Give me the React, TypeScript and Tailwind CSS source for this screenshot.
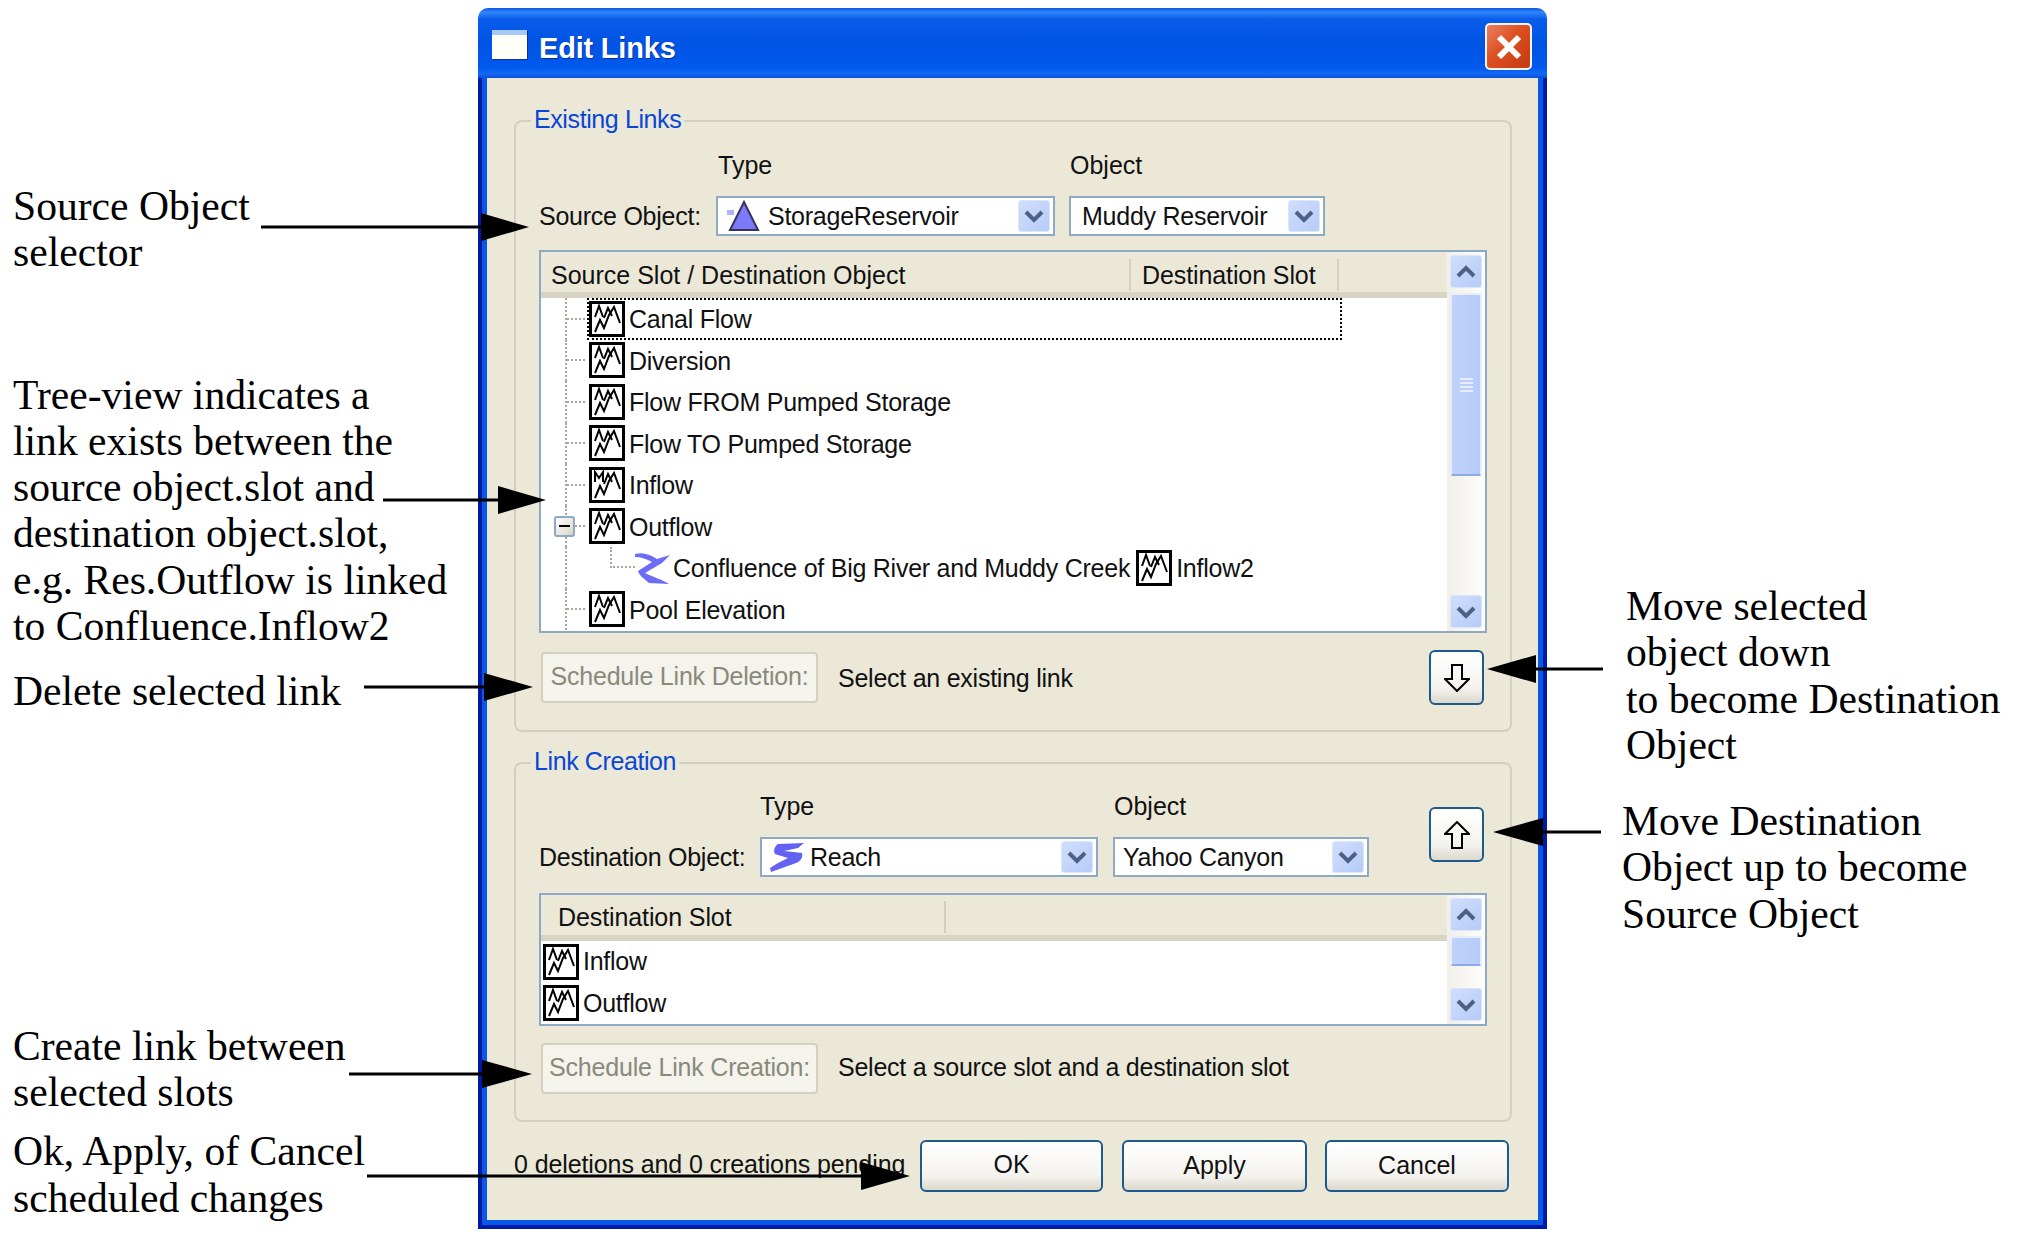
import React from 'react';

const Chevron = ({ up = false }: { up?: boolean }) => (
  <svg width="20" height="14" viewBox="0 0 20 14" className="block">
    <path d={up ? 'M2 11 L10 3 L18 11' : 'M2 3 L10 11 L18 3'} fill="none" stroke="#4d6185" strokeWidth="4" />
  </svg>
);

const ArrowBox = ({ up = false, className }: { up?: boolean; className: string }) => (
  <div className={`flex items-center justify-center rounded-[3px] border border-[#dbe6fd] bg-[linear-gradient(135deg,#d0defc,#b6cbf8)] ${className}`}>
    <Chevron up={up} />
  </div>
);

const WaveIcon = ({ m = false }: { m?: boolean }) => (
  <svg width="36" height="36" viewBox="0 0 36 36" className="block shrink-0">
    <rect x="1.5" y="1.5" width="33" height="33" fill="#fff" stroke="#000" strokeWidth="3" />
    <polyline
      points={m ? '6,15 6,5 10,11 14,5 14,15' : '6,16 10,5 14,16'}
      fill="none"
      stroke="#000"
      strokeWidth="2"
    />
    <polyline points="6,31 11,19 15,27 20,14 25,6 31,22" fill="none" stroke="#000" strokeWidth="2" />
    <polyline points="15,17 19,7 23,15" fill="none" stroke="#000" strokeWidth="2" />
  </svg>
);

const RiverIcon = () => (
  <svg width="35" height="32" viewBox="0 0 35 32" className="block shrink-0">
    <path
      d="M0 2 C8 0 14 2 22 7 L35 3 L27 11 L10 21 C16 24 28 28 34 32 L14 31 C8 26 4 23 3 19 L17 10 C12 7 6 5 0 5 Z"
      fill="#6d6cf6"
    />
  </svg>
);

const ReachIcon = () => (
  <svg width="34" height="29" viewBox="0 0 34 29" className="block shrink-0">
    <path
      d="M8 1 L34 0 L28 5 L14 8 L32 10 C33 14 31 18 26 20 L1 29 L0 25 L8 20 L18 15 L5 11 C3 7 5 3 8 1 Z"
      fill="#6362f5"
    />
  </svg>
);

const ReservoirIcon = () => (
  <svg width="33" height="32" viewBox="0 0 33 32" className="block shrink-0">
    <rect x="0" y="10" width="7" height="5" fill="#b0b4f8" />
    <polygon points="17,2 31,30 3,30" fill="#7c7af8" stroke="#34345c" strokeWidth="2" />
  </svg>
);

const Combo = ({ width, icon, gap, text }: { width: string; icon?: React.ReactNode; gap: string; text: string }) => (
  <div className={`flex h-[40px] items-center border-2 border-[#8fa9c4] bg-white ${width}`}>
    {icon}
    <span className={`flex-1 tracking-[-0.25px] ${gap}`}>{text}</span>
    <ArrowBox className="mr-[3px] h-[32px] w-[32px]" />
  </div>
);

const XpButton = ({ className, children }: { className: string; children: React.ReactNode }) => (
  <div className={`flex items-center justify-center rounded-[6px] border-2 border-[#1f5a8c] bg-[linear-gradient(180deg,#ffffff,#f4f3ee_70%,#dcd8cc)] ${className}`}>
    {children}
  </div>
);

const DisabledButton = ({ children }: { children: React.ReactNode }) => (
  <div className="ml-[2px] flex h-[51px] w-[277px] items-center justify-center rounded-[4px] border-2 border-[#d2d0c0] bg-[#f4f3ec] pb-[3px] tracking-[-0.2px] text-[#8a897c]">
    {children}
  </div>
);

const Scrollbar = ({ thumb, grip = false }: { thumb: string; grip?: boolean }) => (
  <div className="flex w-[38px] shrink-0 flex-col bg-[linear-gradient(90deg,#f1efe8,#fdfdfb)] p-[3px]">
    <ArrowBox up className="h-[33px] w-full" />
    <div className={`mt-[5px] flex items-center justify-center rounded-[3px] border-2 border-[#e6eefe] border-b-[#8fa9e6] bg-[linear-gradient(90deg,#c0d2fb,#b6cbf8)] ${thumb}`}>
      {grip && (
        <div className="flex w-[13px] flex-col gap-[2px]">
          <div className="h-[2px] bg-[#e6eefe]" />
          <div className="h-[2px] bg-[#e6eefe]" />
          <div className="h-[2px] bg-[#e6eefe]" />
          <div className="h-[2px] bg-[#e6eefe]" />
        </div>
      )}
    </div>
    <ArrowBox className="mt-auto h-[33px] w-full" />
  </div>
);

const HeaderCell = ({ className, children }: { className: string; children?: React.ReactNode }) => (
  <div className={`flex h-[32px] items-center border-r-2 border-[#d2cfbc] ${className}`}>{children}</div>
);

const Connector = ({ bare = false, children }: { bare?: boolean; children?: React.ReactNode }) => (
  <div className="relative ml-[24px] flex w-[24px] shrink-0 items-center self-stretch border-l-2 border-dotted border-[#a9a89e]">
    {!bare && <div className="w-[18px] border-t-2 border-dotted border-[#a9a89e]" />}
    {children}
  </div>
);

const RowText = ({ className = 'ml-[4px]', children }: { className?: string; children: React.ReactNode }) => (
  <span className={`mt-[2px] tracking-[-0.25px] whitespace-nowrap ${className}`}>{children}</span>
);

const slots = [
  { name: 'Diversion' },
  { name: 'Flow FROM Pumped Storage' },
  { name: 'Flow TO Pumped Storage' },
  { name: 'Inflow', m: true },
];

const GroupBox = ({ title, className, children }: { title: string; className: string; children: React.ReactNode }) => (
  <div className={`relative rounded-[8px] border-2 border-[#d2d0bf] px-[23px] ${className}`}>
    <span className="absolute left-[15px] top-[-15px] bg-[#ebe8d8] px-[3px] tracking-[-0.4px] text-[#0a46d6]">{title}</span>
    {children}
  </div>
);

const Annotation = ({ lines, className = '' }: { lines: string[]; className?: string }) => (
  <div className={`font-['Liberation_Serif',serif] text-[41.6px] leading-[46.3px] whitespace-nowrap text-black ${className}`}>
    {lines.map((l) => (
      <div key={l}>{l}</div>
    ))}
  </div>
);

const arrows = [
  { x1: 261, y: 227, base: 481, tip: 529 },
  { x1: 383, y: 500, base: 498, tip: 546 },
  { x1: 364, y: 687, base: 484, tip: 533 },
  { x1: 349, y: 1074, base: 482, tip: 532 },
  { x1: 367, y: 1176, base: 861, tip: 910 },
  { x1: 1603, y: 669, base: 1536, tip: 1487 },
  { x1: 1601, y: 832, base: 1543, tip: 1493 },
];

export default function App() {
  return (
    <div className="relative flex h-[1238px] w-[2017px] overflow-hidden bg-white font-['Liberation_Sans',sans-serif] text-[25px] leading-none text-[#111]">
      {/* left notes */}
      <div className="w-[478px] shrink-0 pl-[13px] pt-[183px]">
        <Annotation lines={['Source Object', 'selector']} />
        <Annotation
          className="mt-[96px]"
          lines={[
            'Tree-view indicates a',
            'link exists between the',
            'source object.slot and',
            'destination object.slot,',
            'e.g. Res.Outflow is linked',
            'to Confluence.Inflow2',
          ]}
        />
        <Annotation className="mt-[19px]" lines={['Delete selected link']} />
        <Annotation className="mt-[308px]" lines={['Create link between', 'selected slots']} />
        <Annotation className="mt-[13px]" lines={['Ok, Apply, of Cancel', 'scheduled changes']} />
      </div>

      {/* dialog */}
      <div className="mt-[8px] flex h-[1221px] w-[1069px] shrink-0 flex-col">
        <div className="flex h-[70px] shrink-0 items-center rounded-t-[10px] bg-[linear-gradient(180deg,#0a56e0_0%,#2f86fb_6%,#0a5cea_16%,#0054e4_50%,#0058ee_85%,#1368f2_94%,#0a4fd8_100%)] pl-[14px] pr-[15px]">
          <div className="mt-[2px] h-[29px] w-[35px] border-t-[5px] border-[#a8c8f8] bg-[#fffff6] shadow-[1px_1px_0_#0a2f9a]" />
          <span className="ml-[12px] mt-[10px] text-[29px] font-bold tracking-[-0.2px] text-white [text-shadow:1px_1px_0_#0a2f9a]">Edit Links</span>
          <div className="ml-auto mt-[7px] flex h-[47px] w-[47px] items-center justify-center rounded-[5px] border-2 border-[#f4f4f4] bg-[linear-gradient(135deg,#ea8064,#dc4f20_45%,#c23a10)]">
            <svg width="30" height="30" viewBox="0 0 30 30">
              <path d="M5 5 L25 25 M25 5 L5 25" stroke="#fff" strokeWidth="6" />
            </svg>
          </div>
        </div>

        <div className="flex-1 border-x-4 border-b-4 border-[#0019a8]">
          <div className="h-full border-x-[5px] border-b-[5px] border-[#0a58e6] bg-[#ebe8d8] pl-[27px] pr-[26px] pt-[42px]">
            <GroupBox title="Existing Links" className="h-[612px] pt-[28px]">
              <div className="flex h-[30px] items-center">
                <div className="w-[179px]" />
                <div className="w-[352px]">Type</div>
                <div>Object</div>
              </div>
              <div className="mt-[16px] flex items-center">
                <div className="w-[177px] tracking-[-0.25px]">Source Object:</div>
                <Combo width="w-[339px]" icon={<div className="ml-[9px]"><ReservoirIcon /></div>} gap="pl-[8px]" text="StorageReservoir" />
                <div className="w-[14px]" />
                <Combo width="w-[256px]" gap="pl-[11px]" text="Muddy Reservoir" />
              </div>

              <div className="mt-[14px] flex h-[383px] border-2 border-[#8fa9c4] bg-white">
                <div className="min-w-0 flex-1">
                  <div className="flex h-[46px] items-center border-b-[6px] border-[#d8d4c3] bg-[#ebe8d8] pt-[6px]">
                    <HeaderCell className="w-[590px] pl-[10px]">Source Slot / Destination Object</HeaderCell>
                    <HeaderCell className="w-[208px] pl-[11px] tracking-[-0.1px]">Destination Slot</HeaderCell>
                  </div>
                  <div className="flex h-[41.5px] items-center">
                    <Connector />
                    <div className="flex h-[38px] w-[751px] items-center outline-2 outline-dotted outline-black">
                      <WaveIcon />
                      <RowText>Canal Flow</RowText>
                    </div>
                  </div>
                  {slots.map((s) => (
                    <div key={s.name} className="flex h-[41.5px] items-center">
                      <Connector />
                      <WaveIcon m={s.m} />
                      <RowText>{s.name}</RowText>
                    </div>
                  ))}
                  <div className="flex h-[41.5px] items-center">
                    <Connector>
                      <div className="absolute left-[-13px] flex h-[21px] w-[21px] items-center justify-center rounded-[3px] border-2 border-[#8fa9c4] bg-[linear-gradient(135deg,#ffffff,#d8d4c6)]">
                        <div className="h-[2px] w-[11px] bg-black" />
                      </div>
                    </Connector>
                    <WaveIcon />
                    <RowText>Outflow</RowText>
                  </div>
                  <div className="flex h-[41.5px] items-center">
                    <Connector bare />
                    <div className="ml-[21px] h-[21px] w-[25px] self-start border-b-2 border-l-2 border-dotted border-[#a9a89e]" />
                    <RiverIcon />
                    <RowText className="ml-[3px]">Confluence of Big River and Muddy Creek</RowText>
                    <div className="ml-[6px]">
                      <WaveIcon />
                    </div>
                    <RowText className="ml-[4px]">Inflow2</RowText>
                  </div>
                  <div className="flex h-[41.5px] items-center">
                    <Connector />
                    <WaveIcon />
                    <RowText>Pool Elevation</RowText>
                  </div>
                </div>
                <Scrollbar thumb="h-[183px]" grip />
              </div>

              <div className="mt-[17px] flex h-[55px] items-center">
                <DisabledButton>Schedule Link Deletion:</DisabledButton>
                <span className="ml-[20px] mt-[1px] tracking-[-0.25px]">Select an existing link</span>
                <XpButton className="ml-auto mr-[3px] h-[55px] w-[55px]">
                  <svg width="26" height="28" viewBox="0 0 26 28">
                    <path d="M8 1 H18 V15 H25 L13 27 L1 15 H8 Z" fill="none" stroke="#000" strokeWidth="2" />
                  </svg>
                </XpButton>
              </div>
            </GroupBox>

            <GroupBox title="Link Creation" className="mt-[30px] h-[360px] pt-[27px]">
              <div className="flex items-start">
                <div className="w-[890px]">
                  <div className="flex h-[30px] items-center">
                    <div className="w-[221px]" />
                    <div className="w-[354px]">Type</div>
                    <div>Object</div>
                  </div>
                  <div className="mt-[16px] flex items-center">
                    <div className="w-[221px] tracking-[-0.25px]">Destination Object:</div>
                    <Combo width="w-[338px]" icon={<div className="ml-[8px]"><ReachIcon /></div>} gap="pl-[6px]" text="Reach" />
                    <div className="w-[15px]" />
                    <Combo width="w-[256px]" gap="pl-[8px]" text="Yahoo Canyon" />
                  </div>
                </div>
                <XpButton className="mt-[16px] h-[55px] w-[55px]">
                  <svg width="26" height="28" viewBox="0 0 26 28">
                    <path d="M8 27 H18 V13 H25 L13 1 L1 13 H8 Z" fill="none" stroke="#000" strokeWidth="2" />
                  </svg>
                </XpButton>
              </div>

              <div className="mt-[16px] flex h-[133px] border-2 border-[#8fa9c4] bg-white">
                <div className="min-w-0 flex-1">
                  <div className="flex h-[46px] items-center border-b-[6px] border-[#d8d4c3] bg-[#ebe8d8] pt-[4px]">
                    <HeaderCell className="w-[405px] pl-[17px] tracking-[-0.1px]">Destination Slot</HeaderCell>
                  </div>
                  <div className="flex h-[41.5px] items-center pl-[2px]">
                    <WaveIcon />
                    <RowText className="mb-[2px] ml-[4px]">Inflow</RowText>
                  </div>
                  <div className="flex h-[41.5px] items-center pl-[2px]">
                    <WaveIcon />
                    <RowText className="mb-[2px] ml-[4px]">Outflow</RowText>
                  </div>
                </div>
                <Scrollbar thumb="h-[30px]" />
              </div>

              <div className="mt-[17px] flex items-center">
                <DisabledButton>Schedule Link Creation:</DisabledButton>
                <span className="mb-[2px] ml-[20px] tracking-[-0.25px]">Select a source slot and a destination slot</span>
              </div>
            </GroupBox>

            <div className="mt-[18px] flex h-[52px] items-center pr-[3px]">
              <span className="pb-[3px] tracking-[-0.1px]">0 deletions and 0 creations pending</span>
              <XpButton className="ml-auto h-[52px] w-[183px] pb-[3px]">OK</XpButton>
              <XpButton className="ml-[19px] h-[52px] w-[185px] pb-[2px]">Apply</XpButton>
              <XpButton className="ml-[18px] h-[52px] w-[184px] pb-[2px]">Cancel</XpButton>
            </div>
          </div>
        </div>
      </div>

      {/* right notes */}
      <div className="min-w-0 flex-1 pl-[79px] pt-[583px]">
        <Annotation lines={['Move selected', 'object down', 'to become Destination', 'Object']} />
        <Annotation className="ml-[-4px] mt-[30px]" lines={['Move Destination', 'Object up to become', 'Source Object']} />
      </div>

      {/* callout arrows */}
      <svg className="pointer-events-none absolute left-0 top-0" width="2017" height="1238">
        {arrows.map((a) => (
          <g key={a.y}>
            <line x1={a.x1} y1={a.y} x2={a.base} y2={a.y} stroke="#000" strokeWidth="3" />
            <polygon points={`${a.base},${a.y - 14} ${a.tip},${a.y} ${a.base},${a.y + 14}`} fill="#000" />
          </g>
        ))}
      </svg>
    </div>
  );
}
